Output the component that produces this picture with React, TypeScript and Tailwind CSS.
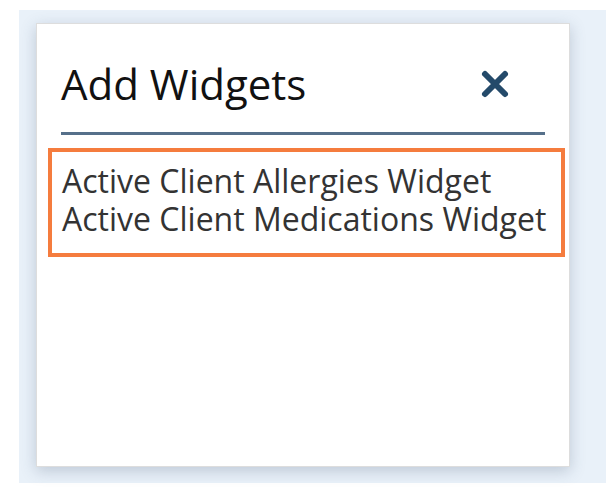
export default function App() {
  return (
    <div className="h-[495px] w-[606px] bg-white" style={{ fontFamily: '"Open Sans", "Noto Sans", sans-serif' }}>
      <div className="ml-[19px] mt-[10px] h-[473px] bg-[#e9f1f9] pl-[17px] pt-[13px]">
        <div className="h-[444px] w-[534px] border border-[#dddddd] bg-white shadow-[0_4px_14px_rgba(60,80,110,0.25)]">
          <div className="mx-[24px] mt-[35px] flex items-center justify-between border-b-[3px] border-[#56708a] pb-[23px]">
            <span className="text-[42px] leading-[50px] text-[#111]">Add Widgets</span>
            <svg width="32" height="32" viewBox="0 0 32 32" className="mr-[34px]">
              <path d="M6 6 L26 26 M26 6 L6 26" stroke="#244a6a" strokeWidth="6" strokeLinecap="round" />
            </svg>
          </div>
          <div className="ml-[11px] mr-[4px] mt-[13px] h-[109px] border-[4px] border-[#f57c3e] pl-[10px] pt-[10px] text-[32px] leading-[38px] text-[#333]">
            <div>Active Client Allergies Widget</div>
            <div>Active Client Medications Widget</div>
          </div>
        </div>
      </div>
    </div>
  );
}
